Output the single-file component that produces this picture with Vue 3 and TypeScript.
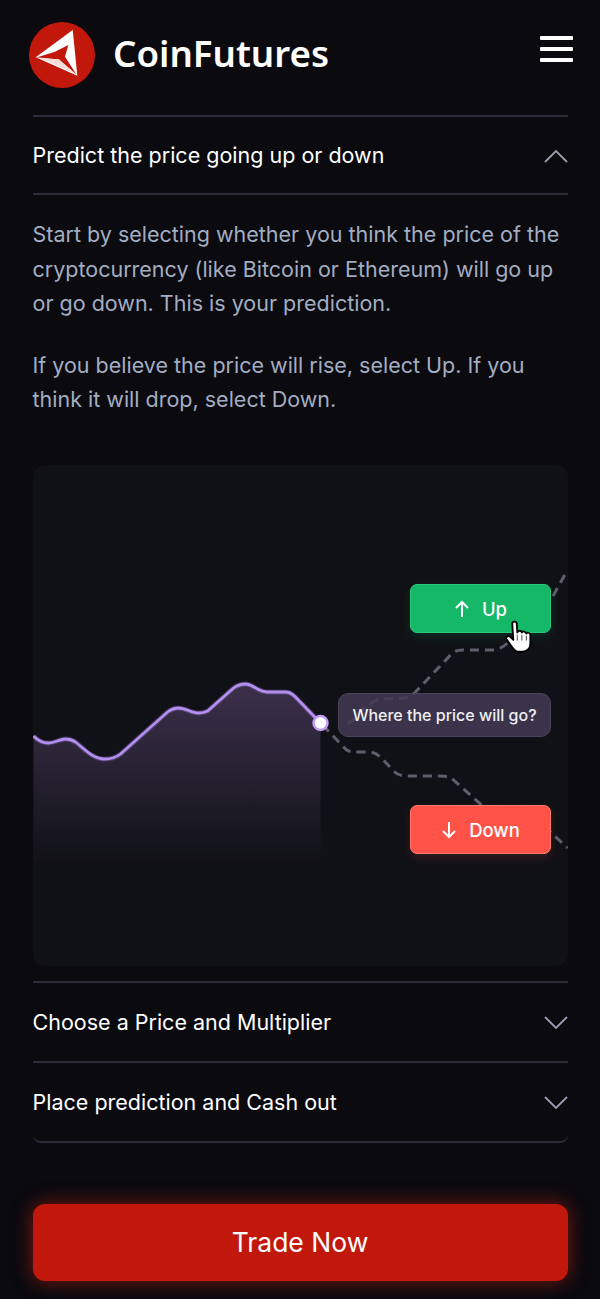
<script setup lang="ts">
const line = "M33 736 C38 741 43 743 48 743 C54 743 59 739 65 739 C69 739 72 740 75 742 C83 748 92 759 104 759 C111 759 116 757 120 754 L167 712 C171 709 174 708 178 708 C185 708 191 713 198 713 C202 713 205 712 207 711 L233 688 C237 685 241 684 245 684 C253 684 257 692 267 692 L285 692 C289 692 292 694 295 697 L320 723";
</script>

<template>
  <div class="page">
    <header class="top">
      <div class="brand">
        <svg class="logo" viewBox="0 0 66 66">
          <circle cx="33" cy="33" r="33" fill="#c2180c" />
          <path d="M6.7 35.3 L43.7 8 L48.3 53.7 Z" fill="#fff" />
          <path d="M7.5 35.5 L26 29.7 L39.3 23 L36 34.7 L47.5 52.5 L30 37.5 Z" fill="#c2180c" />
          <path d="M9 35.5 L30 37.5 L47 52.5 L25 42 Z" fill="#f6dcd8" />
        </svg>
        <span class="name">CoinFutures</span>
      </div>
      <button class="burger" aria-label="Menu"><i></i><i></i><i></i></button>
    </header>

    <main class="faq">
      <section class="item open">
        <div class="head">
          <span>Predict the price going up or down</span>
          <svg class="chev" viewBox="0 0 24 16"><path d="M1 15 L12 4 L23 15" /></svg>
        </div>
        <div class="body">
          <p>Start by selecting whether you think the price of the cryptocurrency (like Bitcoin or Ethereum) will go up or go down. This is your prediction.</p>
          <p>If you believe the price will rise, select Up. If you think it will drop, select Down.</p>
          <div class="chart">
            <svg class="plot" viewBox="32.5 465 535 501">
              <defs>
                <linearGradient id="area" x1="0" y1="0" x2="0" y2="1">
                  <stop offset="0" stop-color="#3b304b" />
                  <stop offset="1" stop-color="#3b304b" stop-opacity="0" />
                </linearGradient>
              </defs>
              <path :d="line + ' L320 865 L33 865 Z'" fill="url(#area)" />
              <path d="M347 723 C356 722 357 708 377 700 C385 698 395 699 403 698 C410 697 412 695 415 692 L450 655 C454 651 457 650 462 650 L490 650 C498 650 503 647 507 643 L552 597 L567 570" class="dash" />
              <path d="M322 725 L345 749 C348 752 352 752 358 752 L368 752 C374 752 378 755 381 758 L393 771 C397 775 401 776 408 776 L440 776 C447 776 450 777 453 780 L482 806 L550 832 L567 848" class="dash" />
              <path :d="line" fill="none" stroke="#b48ef0" stroke-opacity=".25" stroke-width="5" />
              <path :d="line" fill="none" stroke="#b48ef0" stroke-width="2.8" />
              <circle cx="320" cy="723" r="7" fill="#fff" stroke="#c39df5" stroke-width="2.5" />
            </svg>
            <div class="pill up"><svg viewBox="0 0 16 18"><path d="M8 17 V2 M2 8 L8 2 L14 8" /></svg>Up</div>
            <div class="tip">Where the price will go?</div>
            <div class="pill down"><svg viewBox="0 0 16 18"><path d="M8 1 V16 M2 10 L8 16 L14 10" /></svg>Down</div>
            <svg class="hand" viewBox="0 0 26 30">
              <path d="M7 3 C7 1 11 1 11 3 L11.5 11 C12 9 15 9 15.5 11 C16 9.5 19 10 19.5 12 C20 10.5 23 11 23 13.5 L23 21 C23 25 20 28 16 28 L13 28 C10 28 8.5 26 7 24 L2 17 C1 15 3.5 13 5.5 15 L8 17.5 Z" fill="#fff" stroke="#000" stroke-width="1.6" stroke-linejoin="round" />
              <path d="M11.5 13 V18 M15.5 13 V18 M19.5 14 V18" stroke="#555" stroke-width=".9" fill="none" />
            </svg>
          </div>
        </div>
      </section>
      <section class="item">
        <div class="head">
          <span>Choose a Price and Multiplier</span>
          <svg class="chev" viewBox="0 0 24 16"><path d="M1 3 L12 14 L23 3" /></svg>
        </div>
      </section>
      <section class="item last">
        <div class="head">
          <span>Place prediction and Cash out</span>
          <svg class="chev" viewBox="0 0 24 16"><path d="M1 3 L12 14 L23 3" /></svg>
        </div>
      </section>
    </main>

    <div class="cta">Trade Now</div>
  </div>
</template>

<style>
html, body { margin: 0; background: #0a0a0f; }
</style>

<style scoped>
.page {
  position: relative;
  width: 600px;
  height: 1299px;
  overflow: hidden;
  background: #0a0a0f;
  font-family: Inter, "Liberation Sans", sans-serif;
  color: #fff;
  box-sizing: border-box;
}
.top {
  height: 115px;
  box-sizing: border-box;
  padding: 22px 27px 0 29px;
  display: flex;
  justify-content: space-between;
  align-items: flex-start;
}
.brand { display: flex; align-items: center; gap: 18px; }
.logo { width: 66px; height: 66px; display: block; }
.name {
  font-family: "Noto Sans", Lato, sans-serif;
  font-size: 36.7px;
  font-weight: 600;
  line-height: 62px;
  margin-bottom: 4px;
  color: #fff;
}
.burger {
  padding: 0;
  margin: 14px 0 0;
  border: 0;
  background: none;
  width: 33px;
  display: flex;
  flex-direction: column;
  gap: 7px;
}
.burger i { display: block; height: 4px; background: #fff; border-radius: 1px; }
.faq { margin: 0 32.5px; }
.item { border-top: 2px solid #2b2d3b; }
.item.last { border-bottom: 2px solid #2b2d3b; border-radius: 0 0 8px 8px; }
.head {
  height: 78px;
  box-sizing: border-box;
  display: flex;
  align-items: center;
  justify-content: space-between;
  font-size: 21.5px;
  color: #fff;
}
.chev { width: 24px; height: 16px; fill: none; stroke: #9a9cb0; stroke-width: 1.8; }
.open .head { border-bottom: 2px solid #2b2d3b; }
.body { padding-top: 22.4px; padding-bottom: 15.1px; }
.body p {
  margin: 0 0 27px;
  font-size: 21.5px;
  line-height: 34.4px;
  color: #a3adc2;
}
.chart {
  position: relative;
  height: 501px;
  margin-top: 48.6px;
  background: #101116;
  border-radius: 12px;
  overflow: hidden;
}
.plot { position: absolute; inset: 0; width: 535px; height: 501px; display: block; }
.dash { fill: none; stroke: #5f5e6e; stroke-width: 3; stroke-dasharray: 9 6; }
.pill {
  position: absolute;
  left: 377.5px;
  width: 141px;
  height: 49px;
  box-sizing: border-box;
  display: flex;
  align-items: center;
  justify-content: center;
  gap: 12px;
  border-radius: 7px;
  color: #fff;
  font-size: 18.5px;
  font-weight: 500;
}
.pill svg { width: 16px; height: 18px; fill: none; stroke: #fff; stroke-width: 2; }
.up { top: 119px; background: #14b866; border: 1px solid #2cc97c; box-shadow: 0 4px 10px rgba(20, 184, 102, .15); }
.down { top: 340px; background: #ff5347; border: 1px solid #ff7a70; box-shadow: 0 4px 10px rgba(255, 83, 71, .15); }
.tip {
  position: absolute;
  left: 305.5px;
  top: 228px;
  width: 213px;
  height: 44px;
  box-sizing: border-box;
  display: flex;
  align-items: center;
  justify-content: center;
  border-radius: 10px;
  background: rgba(66, 58, 84, .85);
  border: 1px solid #4a435b;
  font-size: 16px;
  font-weight: 500;
  color: #f0eff4;
}
.hand { position: absolute; left: 471px; top: 155px; width: 30px; height: 34px; }
.cta {
  position: absolute;
  left: 32.5px;
  top: 1204px;
  width: 535px;
  height: 77px;
  box-sizing: border-box;
  padding-bottom: 2px;
  border-radius: 12px;
  background: #c2180c;
  box-shadow: 0 0 20px rgba(226, 34, 20, .55);
  display: flex;
  align-items: center;
  justify-content: center;
  font-size: 26.5px;
  color: #fff;
}
</style>
